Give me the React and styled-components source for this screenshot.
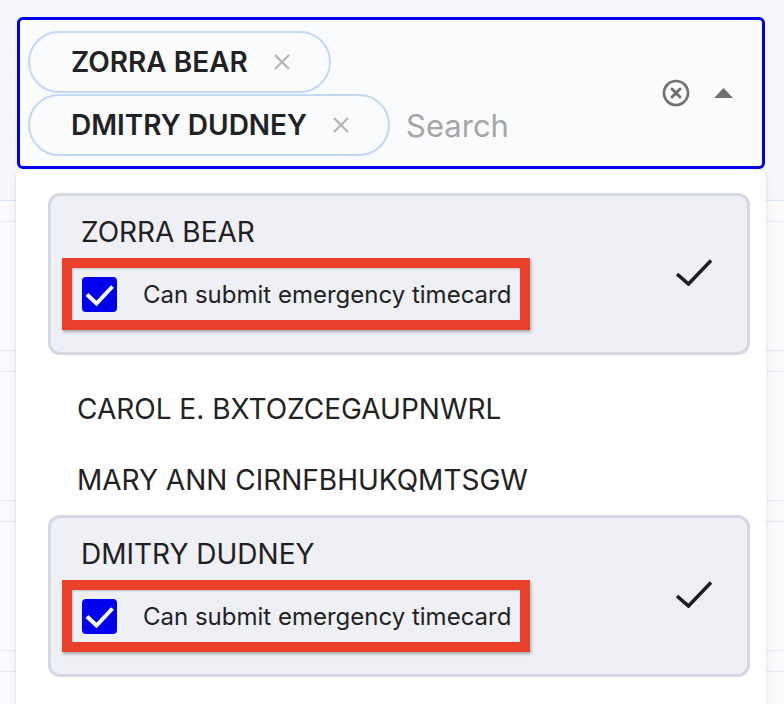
import React from 'react';
import styled, { createGlobalStyle } from 'styled-components';

const GlobalStyle = createGlobalStyle`
  * { box-sizing: border-box; }
  body {
    margin: 0;
    background: #f7f8fb;
    font-family: Inter, "Noto Sans", sans-serif;
    color: #212121;
  }
`;

const Page = styled.div`
  position: relative;
  width: 784px;
  height: 704px;
  overflow: hidden;
  padding-top: 17px;
`;

const Select = styled.div`
  display: flex;
  align-items: center;
  width: 748px;
  height: 152px;
  margin-left: 17px;
  border: 3px solid #0000ee;
  border-radius: 6px;
  background: #fafbfd;
`;

const ValueArea = styled.div`
  flex: 1;
  align-self: stretch;
  display: flex;
  flex-wrap: wrap;
  align-items: center;
  align-content: flex-start;
  row-gap: 1px;
  column-gap: 16px;
  padding: 11px 0 10px 8px;
`;

const Chip = styled.div`
  display: inline-flex;
  align-items: center;
  gap: 25px;
  height: 62px;
  padding: 0 38px 0 41px;
  border: 2px solid #c3d7f7;
  border-radius: 31px;
  font-size: 28px;
  font-weight: 600;
  color: #222;
  white-space: nowrap;
`;

const SearchInput = styled.input`
  width: 200px;
  border: none;
  outline: none;
  background: transparent;
  font-family: inherit;
  font-size: 31px;
  color: #222;
  padding: 0;
  &::placeholder { color: #a6a6a6; }
`;

const Indicators = styled.div`
  display: flex;
  align-items: center;
  gap: 24px;
  padding-right: 29px;
  svg { display: block; }
`;

const Table = styled.div`
  margin-top: 31px;
  border-top: 1px solid #d9e5f8;
`;

const RowHead = styled.div`
  height: 21px;
  background: #fbfbfd;
  border-bottom: 1px solid #eaecf1;
`;

const RowBody = styled.div`
  height: 129px;
  background: #fcfcfe;
  border-bottom: 1px solid #eaecf1;
`;

const Menu = styled.div`
  position: absolute;
  top: 170px;
  left: 16px;
  width: 750px;
  bottom: 0;
  background: #fff;
  border-radius: 6px 6px 0 0;
  box-shadow: 0 0 0 1px rgba(20, 30, 60, 0.04), 0 4px 10px rgba(20, 30, 60, 0.08);
  padding: 23px 16px 0 32px;
  display: flex;
  flex-direction: column;
`;

const Card = styled.div`
  display: flex;
  align-items: center;
  margin-bottom: 18px;
  padding: 19px 35px 22px 30px;
  background: #eff0f5;
  border: 3px solid #d6d9e3;
  border-radius: 12px;
`;

const CardBody = styled.div`
  flex: 1;
  display: flex;
  flex-direction: column;
  align-items: flex-start;
`;

const Name = styled.div`
  font-size: 28px;
  line-height: 34px;
  color: #212121;
  white-space: nowrap;
`;

const Permission = styled.label`
  display: flex;
  align-items: center;
  gap: 26px;
  height: 72px;
  margin: 9px 0 0 -19px;
  padding: 0 9px 0 10px;
  border: 10px solid #e9412b;
  box-shadow: 1px 2px 3px rgba(0, 0, 0, 0.3), inset 1px 1px 2px rgba(0, 0, 0, 0.2);
  font-size: 24px;
  color: #222;
  white-space: nowrap;
`;

const Box = styled.span`
  display: flex;
  width: 35px;
  height: 35px;
  border-radius: 4px;
  background: #0000ee;
`;

const Option = styled.div`
  display: flex;
  align-items: center;
  height: 71px;
  padding-left: 29px;
  font-size: 28px;
  color: #222;
`;

const ChipX = () => (
  <svg width="18" height="18" viewBox="0 0 18 18">
    <path d="M2 2L16 16M16 2L2 16" stroke="#b5b5b5" strokeWidth="2.2" />
  </svg>
);

const ClearIcon = () => (
  <svg width="28" height="28" viewBox="0 0 28 28">
    <circle cx="14" cy="14" r="12" fill="none" stroke="#707070" strokeWidth="2.6" />
    <path d="M10 10L18 18M18 10L10 18" stroke="#707070" strokeWidth="3" strokeLinecap="round" />
  </svg>
);

const Arrow = () => (
  <svg width="19" height="10" viewBox="0 0 19 10">
    <polygon points="0,10 9.5,0 19,10" fill="#707070" />
  </svg>
);

const BigCheck = () => (
  <svg width="36" height="27" viewBox="0 0 36 27">
    <polyline points="1,15 12.5,25 35,1.5" fill="none" stroke="#1e1e1e" strokeWidth="3.6" />
  </svg>
);

const Checkbox = () => (
  <Box>
    <svg width="35" height="35" viewBox="0 0 35 35">
      <polyline points="5,17.5 14.5,26.5 30.5,9.5" fill="none" stroke="#fff" strokeWidth="4" />
    </svg>
  </Box>
);

const people = [
  { name: 'ZORRA BEAR', selected: true },
  { name: 'CAROL E. BXTOZCEGAUPNWRL' },
  { name: 'MARY ANN CIRNFBHUKQMTSGW' },
  { name: 'DMITRY DUDNEY', selected: true },
];

const App = () => {
  const selected = people.filter((p) => p.selected);

  return (
    <Page>
      <GlobalStyle />
      <Select>
        <ValueArea>
          {selected.map((p) => (
            <Chip key={p.name}>
              {p.name}
              <ChipX />
            </Chip>
          ))}
          <SearchInput placeholder="Search" />
        </ValueArea>
        <Indicators>
          <ClearIcon />
          <Arrow />
        </Indicators>
      </Select>

      <Table>
        {[0, 1, 2, 3].map((i) => (
          <div key={i}>
            <RowHead />
            <RowBody />
          </div>
        ))}
      </Table>

      <Menu>
        {people.map((p) =>
          p.selected ? (
            <Card key={p.name}>
              <CardBody>
                <Name>{p.name}</Name>
                <Permission>
                  <Checkbox />
                  Can submit emergency timecard
                </Permission>
              </CardBody>
              <BigCheck />
            </Card>
          ) : (
            <Option key={p.name}>{p.name}</Option>
          )
        )}
      </Menu>
    </Page>
  );
};

export default App;
